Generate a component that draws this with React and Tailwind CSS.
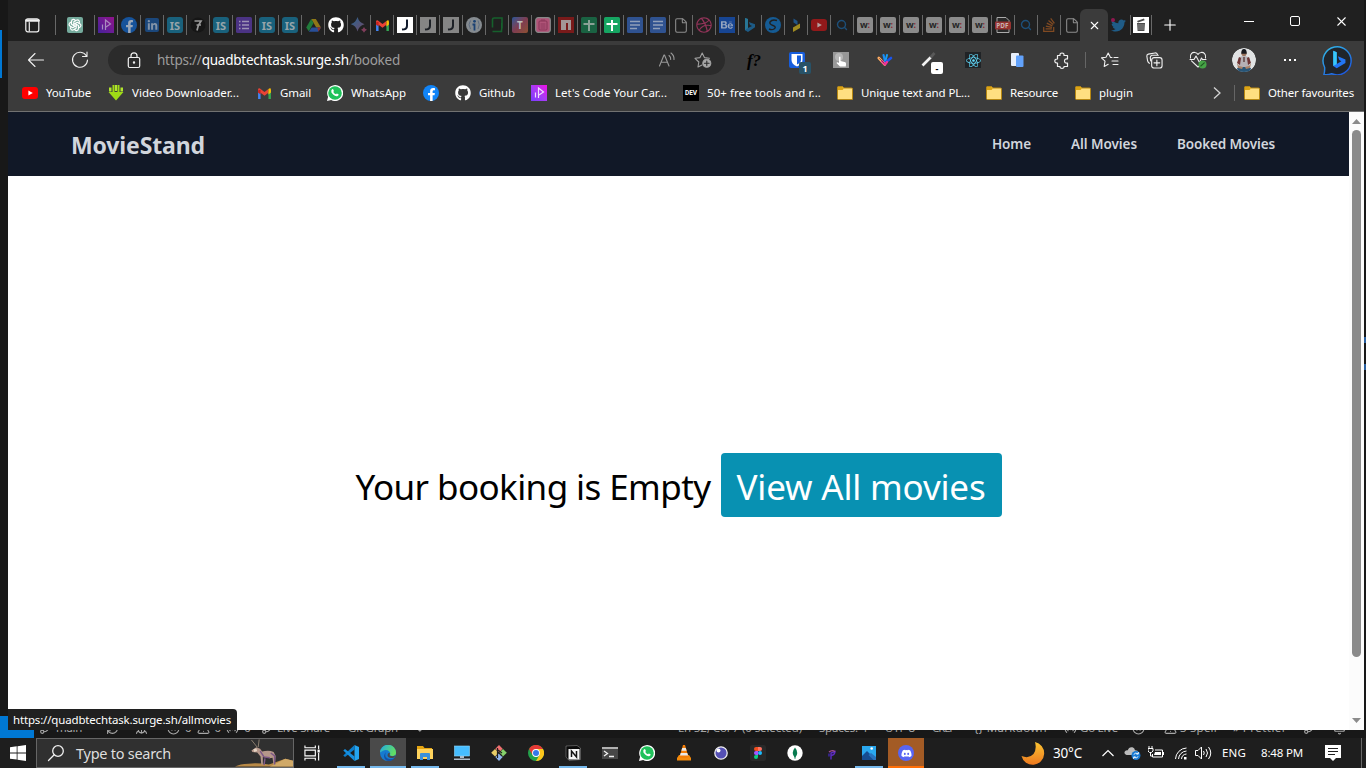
import React, { useLayoutEffect, useRef } from "react";
import { FaFacebookF, FaLinkedinIn, FaGithub, FaDribbble, FaBehance, FaStackOverflow, FaTwitter, FaDiscord, FaReact } from "react-icons/fa";
import { TbBrandOpenai } from "react-icons/tb";
import { X, Plus, Search, File, GitBranch, RefreshCw, CircleX, TriangleAlert, Radio, Bell, Check, Bug } from "lucide-react";

/* Single line of text whose tracking is adjusted to fill the given width. */
function Fit({ w, className = "", children }) {
  const ref = useRef(null);
  useLayoutEffect(() => {
    const el = ref.current;
    const adjust = () => {
      el.style.letterSpacing = "0px";
      const natural = el.getBoundingClientRect().width;
      el.style.letterSpacing = `${(w - natural) / el.textContent.length}px`;
    };
    adjust();
    if (document.fonts) document.fonts.ready.then(adjust);
  }, [w]);
  return (
    <span ref={ref} className={`inline-block shrink-0 whitespace-pre ${className}`}>
      {children}
    </span>
  );
}

/* ---------- tab favicons ---------- */
const ISIcon = () => <span className="flex h-4 w-4 items-center justify-center rounded-[3px] bg-[#19617c] text-[11px] font-bold leading-none text-[#96a4aa]">IS</span>;
const JIcon = ({ on }) => (
  <svg viewBox="0 0 16 16" className="h-4 w-4">
    <rect width="16" height="16" fill={on ? "#fff" : "#858585"} />
    <path d="M10 2.5v6.300q0 3-2.600 3.400l-2.400.3" fill="none" stroke={on ? "#101a2c" : "#1c2026"} strokeWidth="2" />
  </svg>
);
const WIcon = () => <span className="flex h-4 w-4 items-center justify-center rounded-[2px] bg-[#8b8b8b] pb-[2px] text-[9px] font-bold leading-none text-[#252525]">w<span className="text-[#8d2831]">:</span></span>;
const SearchIcon = () => <Search className="h-3 w-3 text-[#1d4f79]" strokeWidth={2.8} />;
const FileIcon = () => <File className="h-[17px] w-[17px] text-[#8c8c8c]" strokeWidth={1.6} />;
const SheetIcon = ({ on }) => (
  <svg viewBox="0 0 16 16" className="h-4 w-4">
    <rect width="16" height="16" rx="1.5" fill={on ? "#16a562" : "#1a6242"} />
    <path d="M8 3v11M2.500 7h11" stroke={on ? "#fff" : "#8ba196"} strokeWidth="2" />
  </svg>
);
const DocIcon = () => (
  <svg viewBox="0 0 16 16" className="h-4 w-4">
    <rect width="16" height="16" rx="1.5" fill="#2f5290" />
    <path d="M3 4.5h10M3 8h10M3 11.5h7" stroke="#91a0b9" strokeWidth="1.5" />
  </svg>
);
const Clockwork = ({ dim }) => (
  <svg viewBox="0 0 16 16" className="h-4 w-4">
    <defs>
      <linearGradient id={dim ? "pp1" : "pp2"} x1="0" y1="1" x2="1" y2="0">
        <stop stopColor={dim ? "#45219a" : "#7a3cff"} />
        <stop offset=".5" stopColor={dim ? "#6b1c94" : "#a93bf5"} />
        <stop offset="1" stopColor={dim ? "#91128a" : "#f010e5"} />
      </linearGradient>
    </defs>
    <rect width="16" height="16" fill={`url(#${dim ? "pp1" : "pp2"})`} />
    <path d="M4.500 7.500v5M7.500 13V3l5 4-4.500 3" fill="none" stroke={dim ? "#a98bc0" : "#f0dcff"} strokeWidth="1.2" />
  </svg>
);
const GmailIcon = () => (
  <svg viewBox="0 0 16 12" className="h-[11px] w-[15px]">
    <path d="M1 12V1.5L3.7 4v8z" fill="#4285f4" />
    <path d="M15 12V1.5L12.3 4v8z" fill="#34a853" />
    <path d="M1 5V2q0-2 2-1.5L8 4.3 12.3 1v4.2L8 8.4 3.7 5.2z" fill="#ea4335" />
    <path d="M12.3 1q2.7-1.6 2.7 1v3l-2.7 2z" fill="#fbbc04" />
    <path d="M1 2.5V5l2.7 2V2z" fill="#c5221f" />
  </svg>
);
const YtIcon = ({ dim }) => (
  <svg viewBox="0 0 16 12" className="h-3 w-4">
    <rect width="16" height="12" rx="3" fill={dim ? "#92191a" : "#f00"} />
    <path d="M6.4 3.4v5.2L10.8 6z" fill={dim ? "#b3a0a0" : "#fff"} />
  </svg>
);
const BingMark = ({ className, a = "#2ec5f4", b = "#2469f5" }) => (
  <svg viewBox="0 0 16 16" className={className}>
    <path d="M3 1l3 1v9l4-2.1-2-1L6.8 5 13 7.3v3L6 15l-3-1.8z" fill={b} />
    <path d="M3 1l3 1v9l-3 2.2z" fill={a} />
  </svg>
);

const tabs = [
  <Clockwork dim />,
  <span className="flex h-4 w-4 items-end justify-center rounded-full bg-[#16539b]"><FaFacebookF className="h-[13px] w-[11px] text-[#9aa8ba]" /></span>,
  <span className="flex h-[14px] w-[14px] items-center justify-center rounded-[2px] bg-[#1b477b]"><FaLinkedinIn className="h-[11px] w-[11px] text-[#8293a8]" /></span>,
  <ISIcon />,
  <svg viewBox="0 0 16 16" className="h-4 w-4"><circle cx="8" cy="8" r="7.5" fill="#161616" /><path d="M4.500 4H11L8.300 8.500 7 13.500M6.500 8h4.500" fill="none" stroke="#999" strokeWidth="1.7" /></svg>,
  <ISIcon />,
  <svg viewBox="0 0 16 16" className="h-4 w-4"><rect width="16" height="16" rx="1.5" fill="#4b3384" /><path d="M6 4.5h7M6 8h7M6 11.5h7M3 4.5h1.5M3 8h1.5M3 11.5h1.5" stroke="#9d93b4" strokeWidth="1.6" /></svg>,
  <ISIcon />,
  <ISIcon />,
  <svg viewBox="0 0 16 16" className="h-[15px] w-[15px]"><path d="M5.5 1h5L16 10h-5z" fill="#8f7617" /><path d="M5.5 1l2.6 4.2L3 14 .2 10z" fill="#207b3a" /><path d="M6.1 10H16l-3 4.7H3z" fill="#284f98" /><path d="M12 10h4l-2.7 4.5z" fill="#91302a" /></svg>,
  <FaGithub className="h-4 w-4 text-white" />,
  <svg viewBox="0 0 16 16" className="h-4 w-4"><defs><linearGradient id="bd" x1="0" y1="0" x2="1" y2="1"><stop stopColor="#286591" /><stop offset="1" stopColor="#704866" /></linearGradient></defs><path d="M6.500 0Q8 5.500 13.500 7.200 8 8.500 6.500 14.500 5 8.500-.5 7.200 5 5.500 6.500 0" fill="url(#bd)" /><path d="M13 10q.8 2 3 2.800-2.200.8-3 3-.8-2.200-3-3 2.200-.8 3-2.800" fill="#7f3d5a" /></svg>,
  <GmailIcon />,
  <JIcon on />,
  <JIcon />,
  <JIcon />,
  <svg viewBox="0 0 16 16" className="h-4 w-4"><circle cx="8" cy="8" r="8" fill="#858b90" /><circle cx="8.500" cy="4.300" r="1.4" fill="#1b4173" /><path d="M6.500 7.500h2v6" fill="none" stroke="#1b4173" strokeWidth="1.8" /><path d="M4.500 3.500Q1.500 7.500 4.500 12M12 3.500q2.500 4 0 8.500" fill="none" stroke="#5d6c80" /></svg>,
  <svg viewBox="0 0 16 16" className="h-4 w-4"><path d="M3.500 10.500V2.500q0-1.500 1.500-1.500h8v10M12.500 12.500v2H3.500M12.800 6v6.500" fill="none" stroke="#16602c" strokeWidth="1.6" /></svg>,
  <span className="flex h-4 w-4 items-center justify-center rounded-[2px] bg-gradient-to-br from-[#205295] via-[#7e3c50] to-[#8d5130] text-[10px] font-bold text-[#bbb]">T</span>,
  <svg viewBox="0 0 16 16" className="h-4 w-4"><rect x=".7" y=".7" width="14.6" height="14.6" rx="2.5" fill="#b05478" stroke="#888" strokeWidth="1.2" /><rect x="4" y="4" width="8" height="9" rx="1" fill="none" stroke="#873456" /><path d="M6 3h4M5.500 7h5M5.500 9h5M5.500 11h5" stroke="#873456" strokeWidth=".8" /></svg>,
  <svg viewBox="0 0 16 16" className="h-4 w-4"><rect width="16" height="16" fill="#791a1a" /><path d="M3 3h10v10h-3V6H8v7H3z" fill="#a39797" /></svg>,
  <SheetIcon />,
  <SheetIcon on />,
  <DocIcon />,
  <DocIcon />,
  <FileIcon />,
  <FaDribbble className="h-4 w-4 text-[#94345a]" />,
  <span className="flex h-4 w-4 items-center justify-center bg-[#174593]"><FaBehance className="h-3 w-3 text-[#97a6bf]" /></span>,
  <BingMark className="h-4 w-4" a="#287694" b="#1d5b86" />,
  <svg viewBox="0 0 16 16" className="h-4 w-4"><circle cx="8" cy="8" r="8" fill="#155b94" /><path d="M12 3.5Q7 2 5 5q-1 2 3 3.5Q12 10 9 12q-2 1.3-5 0" fill="none" stroke="#202020" strokeWidth="1.4" /></svg>,
  <svg viewBox="0 0 16 16" className="h-4 w-4"><path d="M5.500 1.500l4 2.500v4l-4-2.500z" fill="#215485" /><path d="M5 10.500l7-4V11l-7 4z" fill="#a08b20" /></svg>,
  <YtIcon dim />,
  <SearchIcon />,
  <WIcon />, <WIcon />, <WIcon />, <WIcon />, <WIcon />, <WIcon />,
  <svg viewBox="0 0 16 16" className="h-4 w-4"><path d="M2 .5h9l3 3v12H2z" fill="#292929" stroke="#aaa" /><rect y="4.5" width="16" height="8" rx="1" fill="#963330" /><text x="1.3" y="11" fontSize="6.3" fontWeight="700" fill="#c8b2b2" fontFamily="Open Sans, sans-serif">PDF</text></svg>,
  <SearchIcon />,
  <FaStackOverflow className="h-4 w-4 text-[#804a22]" />,
  <FileIcon />,
];

/* ---------- bookmarks ---------- */
const Folder = () => (
  <svg viewBox="0 0 16 16" className="h-4 w-4 shrink-0">
    <path d="M.5 13.500v-11Q.5 1.500 1.500 1.500h4L7 3h7.500q1 0 1 1v10q0 .5-.5.5H1.500q-1 0-1-1z" fill="#ffdf80" stroke="#b68712" />
    <path d="M1 2h4.500L7 3.500 5.500 5H1z" fill="#dba315" />
  </svg>
);
const WhatsIcon = () => (
  <svg viewBox="0 0 16 16" className="h-4 w-4 shrink-0">
    <path d="M0 16l1.100-4.200A8 8 0 1 1 4.200 15z" fill="#fff" />
    <circle cx="8" cy="8" r="6.800" fill="#20c25b" />
    <path d="M5.300 4.200q.8-.3 1.100.5l.5 1.300-.6.900Q7.200 8.500 9 9.300l.8-.9 1.800.9q.2 1.700-1.500 2-2 .3-4-1.700Q3.700 7.300 4.300 5.400q.3-.9 1-1.200" fill="#fff" />
  </svg>
);
const marks = [
  { cell: "w-[86px]", w: 45, t: "YouTube", icon: <YtIcon /> },
  { cell: "w-[148px]", w: 107, t: "Video Downloader...", icon: <svg viewBox="0 0 16 16" className="h-4 w-4"><path d="M4.500 0h2v7h3V0h2v7H15.500L8 15.500.5 7h4z" fill="#9fdb16" /><path d="M7 0h2v6H7zM1 2.500h2.500v4H1zM12.500 2.500H15v4h-2.500z" fill="#b2e52e" /></svg> },
  { cell: "w-[71px]", w: 31, t: "Gmail", icon: <GmailIcon /> },
  { cell: "w-[96px]", w: 55, t: "WhatsApp", icon: <WhatsIcon /> },
  { cell: "w-[32px]", icon: <span className="flex h-4 w-4 items-end justify-center rounded-full bg-[#1184f7]"><FaFacebookF className="h-[13px] w-[11px] text-white" /></span> },
  { cell: "w-[76px]", w: 36, t: "Github", icon: <FaGithub className="h-4 w-4 text-white" /> },
  { cell: "w-[152px]", w: 112, t: "Let's Code Your Car...", icon: <Clockwork /> },
  { cell: "w-[154px]", w: 114, t: "50+ free tools and r...", icon: <span className="flex h-4 w-4 items-center justify-center bg-black font-['Roboto',sans-serif] text-[6.5px] font-bold leading-none text-white">DEV</span> },
  { cell: "w-[149px]", w: 109, t: "Unique text and PL...", icon: <Folder /> },
  { cell: "w-[89px]", w: 48, t: "Resource", icon: <Folder /> },
  { cell: "w-[126px]", w: 34, t: "plugin", icon: <Folder /> },
];
const Mark = ({ cell, w, t, icon }) => (
  <div className={`flex shrink-0 items-center gap-2 ${cell}`}>
    <span className="flex w-4 shrink-0 items-center justify-center">{icon}</span>
    {t && <Fit w={w} className="text-[11.5px] leading-4">{t}</Fit>}
  </div>
);

/* ---------- toolbar ---------- */
const Cell = ({ w = "w-11", children }) => <div className={`flex h-[30px] shrink-0 items-center justify-center ${w}`}>{children}</div>;
const line = { fill: "none", stroke: "#f0f0f0", strokeWidth: 1.1, strokeLinecap: "round", strokeLinejoin: "round" };

function TabBar() {
  return (
    <div className="flex h-[41px] shrink-0 items-start bg-[#202020]">
      <div className="mt-[15px] flex h-5 w-[47px] shrink-0 items-center pl-[17px]">
        <svg viewBox="0 0 15 15" className="h-[15px] w-[15px]" {...line} strokeWidth="1.2"><rect x=".8" y=".8" width="13" height="13" rx="2" /><path d="M4.300 4.500V13" /><path d="M1.500 2.500h12" strokeWidth="2.6" /></svg>
      </div>
      <div className="mt-[15px] flex h-5 w-[39px] shrink-0 items-center border-l border-[#686868] pl-[11px]">
        <span className="flex h-4 w-4 items-center justify-center rounded-[2px] bg-[#75aa9c]"><TbBrandOpenai className="h-[14px] w-[14px] text-white" /></span>
      </div>
      {tabs.map((icon, i) => (
        <div key={i} className={`mt-[15px] flex h-5 shrink-0 items-center border-l border-[#686868] pl-[3px] ${i === tabs.length - 1 ? "w-5" : "w-[23px]"}`}>
          <span className="flex h-4 w-4 shrink-0 items-center justify-center">{icon}</span>
        </div>
      ))}
      <div className="mt-[9px] flex h-8 w-7 shrink-0 items-center justify-center rounded-t-[6px] bg-[#3b3b3b]">
        <X className="h-[13px] w-[13px] text-white" strokeWidth={2} />
      </div>
      <div className="mt-[15px] flex h-5 w-[22px] shrink-0 items-center pl-[3px]">
        <span className="relative flex"><FaTwitter className="h-[15px] w-[15px] text-[#1f5c87]" /><span className="absolute left-0 top-0 h-1 w-1 rounded-full bg-[#8f174e]" /></span>
      </div>
      <div className="mt-[15px] flex h-5 w-[22px] shrink-0 items-center justify-center border-x border-[#686868]">
        <svg viewBox="0 0 16 16" className="h-4 w-4"><rect width="16" height="16" fill="#fff" /><path d="M4 4l7-2.500.6 1.700L5 5.500zM4 6h8l-.6 8H4.600z" fill="#4c4c4c" /><path d="M4.500 8h7M4.500 10h7M4.500 12h7" stroke="#bbb" strokeWidth=".6" /></svg>
      </div>
      <div className="mt-[16px] flex w-9 shrink-0 justify-center"><Plus className="h-[18px] w-[18px] text-white" strokeWidth={1.5} /></div>
      <div className="ml-auto flex h-[42px] items-center">
        <span className="flex w-[46px] justify-center"><span className="h-px w-[10px] bg-white" /></span>
        <span className="flex w-[46px] justify-center"><span className="h-[10px] w-[10px] rounded-[2px] border border-white" /></span>
        <span className="flex w-[46px] justify-center"><X className="h-[15px] w-[15px] text-white" strokeWidth={1.7} /></span>
      </div>
    </div>
  );
}

function Toolbar() {
  return (
    <div className="flex h-[34px] shrink-0 items-end bg-[#3b3b3b]">
      <Cell w="w-[56px]"><svg viewBox="0 0 18 16" className="h-4 w-[18px]" {...line}><path d="M16.500 8H1.500M8 1.500L1.500 8 8 14.500" /></svg></Cell>
      <Cell w="w-[32px]"><svg viewBox="0 0 18 18" className="h-[18px] w-[18px]" {...line}><path d="M15.500 5A7.500 7.500 0 1 0 16.500 9M16 1v4.500h-4.500" /></svg></Cell>
      <div className="ml-3 flex h-[30px] w-[617px] shrink-0 items-center rounded-full bg-[#2b2b2b] pl-[19px]">
        <svg viewBox="0 0 14 17" className="h-[17px] w-[14px] shrink-0" {...line} strokeWidth="1.2"><rect x="1.3" y="5.5" width="11.400" height="10" rx="1.5" /><path d="M4 5.500V3.800a3 3 0 0 1 6 0v1.700" /><circle cx="7" cy="10.500" r=".6" fill="#fff" /></svg>
        <Fit w={243} className="ml-4 text-[13.5px] leading-5 text-[#9d9d9d]">https://<span className="text-white">quadbtechtask.surge.sh</span>/booked</Fit>
        <svg viewBox="0 0 18 16" className="ml-auto mr-[18px] h-4 w-[18px]" {...line} stroke="#999"><path d="M1.500 14L6 3h.5L11 14M3 10.200h6.500M11 3.500q2 1.500 1.700 4M13 1q3.300 2.500 3 6.500" /></svg>
        <svg viewBox="0 0 18 18" className="mr-[13px] h-[18px] w-[18px]" {...line} stroke="#a0a0a0"><path d="M8 14l-4 2 .8-5L1 7.300l5-.7L8.200 2l2.200 4.600 5 .7" /><circle cx="12.800" cy="12.300" r="4" fill="#a9a9a9" /><path d="M12.800 10v4.600M10.500 12.300h4.600" stroke="#2b2b2b" /></svg>
      </div>
      <div className="ml-[6px] flex">
        <Cell><span className="pl-[2px] font-['Liberation_Serif',serif] text-[17px] font-bold italic leading-none text-black">f?</span></Cell>
        <Cell>
          <span className="relative flex h-4 w-4">
            <svg viewBox="0 0 16 16" className="h-4 w-4"><rect width="16" height="16" rx="2" fill="#175ddc" /><path d="M2.500 2h11v6q0 4-5.500 6.500Q2.500 12 2.500 8z" fill="#fff" /><path d="M8 3.500h4V8q0 2.500-4 4.500z" fill="#175ddc" /></svg>
            <span className="absolute left-[10px] top-[10px] flex h-3 w-3 items-center justify-center rounded-[2px] bg-[#285267] text-[9px] font-bold leading-none text-white">1</span>
          </span>
        </Cell>
        <Cell><svg viewBox="0 0 16 16" className="h-4 w-4"><rect width="16" height="16" fill="#989898" /><circle cx="6" cy="5" r="4" fill="#b7b7b7" /><path d="M6 5q1-1 1.500 0v4l5 1.300q1 .7.300 4.200H7L3.500 11q.5-1.500 2.500 0z" fill="#fff" /></svg></Cell>
        <Cell><svg viewBox="0 0 16 16" className="h-4 w-4" fill="none" strokeLinecap="round" strokeLinejoin="round"><path d="M6.500 3L8 9" stroke="#188cf5" strokeWidth="2.2" /><path d="M10 3L8.700 8" stroke="#179ff8" strokeWidth="2" /><path d="M14 6L8.500 10.500" stroke="#1c55ee" strokeWidth="2.6" /><path d="M1.800 6L7.800 12.500" stroke="#ffad61" strokeWidth="2.6" /><path d="M5 9.300L8 12.500 10 10" stroke="#f0329a" strokeWidth="2.3" /><path d="M2.500 6.500L7 11" stroke="#5b3545" strokeWidth=".7" /></svg></Cell>
        <Cell>
          <span className="relative flex h-4 w-4">
            <svg viewBox="0 0 16 16" className="h-4 w-4"><path d="M1.500 13.500L10 5" stroke="#f2f2f2" strokeWidth="2.6" /><path d="M9.500 5.500L13.500 1" stroke="#595959" strokeWidth="2.8" /></svg>
            <span className="absolute left-[10px] top-[10px] flex h-3 w-3 items-center justify-center rounded-[2px] bg-white text-[9px] font-bold leading-none text-black">-</span>
          </span>
        </Cell>
        <Cell><span className="flex h-4 w-4 items-center justify-center bg-[#202326]"><FaReact className="h-[15px] w-[15px] text-[#61dafb]" /></span></Cell>
        <Cell><svg viewBox="0 0 16 16" className="h-4 w-4"><rect x="2" y="1" width="8" height="13" rx="1" fill="#e8effb" /><rect x="7" y="3.500" width="7.500" height="11.500" rx="1" fill="#62a2fb" /></svg></Cell>
        <Cell><svg viewBox="0 0 17 17" className="h-[17px] w-[17px]" {...line} strokeWidth="1.2"><path d="M4.500 3.500H7Q6.700 1 9 1t2 2.500h3.500V7Q11.500 6.700 11.500 9t3 2v3.500H11Q11.200 16.300 9 16.300T7 14.500H4.500V11Q1.800 11.200 1.800 9T4.500 7z" /></svg></Cell>
      </div>
      <div className="mb-[7px] ml-[2px] mr-[2px] h-4 w-px bg-[#666]" />
      <div className="flex">
        <Cell><svg viewBox="0 0 18 16" className="h-4 w-[18px]" {...line}><path d="M11 5.500H9.500L7.200 1 5 5.300l-4.500.6L4 9.200l-.8 5.300 4-2.200M13 5.500h4M11 9h6M12 12.500h5" /></svg></Cell>
        <Cell><svg viewBox="0 0 18 18" className="h-[17px] w-[17px]" {...line} strokeWidth="1.2"><rect x="6" y="6" width="11" height="11" rx="2.5" /><path d="M11.500 8.500v6M8.500 11.500h6M3.500 12Q2 11 1.700 9.500L.9 4.500Q.7 2.700 2.400 2.300L9.500 1q2-.2 2.600 1.500M5 9.500 4.500 6q0-2 2-2.500H13" /></svg></Cell>
        <Cell>
          <svg viewBox="0 0 18 18" className="h-[18px] w-[18px]" {...line}><path d="M1.500 7C.5 3 3.500 1 6 1.500q2 .3 3 2 1-1.700 3-2C14.500 1 17.500 3 16.500 7M2.500 9.800L9 16l1-.8M1 8.500h4L7 5l3.500 6.500L12.500 7l1 1.500H17" /><circle cx="13.500" cy="13.500" r="4" fill="#46a346" stroke="none" /><path d="M11.800 15l3.500-3.200" stroke="#1f5722" /></svg>
        </Cell>
        <Cell w="w-12">
          <svg viewBox="0 0 24 24" className="h-6 w-6 rounded-full"><circle cx="12" cy="12" r="12" fill="#e1e3e4" /><path d="M6 11q2-3 6-3t6 3l-1 8H7z" fill="#b5b0b5" /><path d="M7 9l2 1-1 7-3-2zM17 9l-2 1 1 7 3-2z" fill="#6e3434" /><path d="M11 9h2v5h-2z" fill="#756060" /><path d="M5 20l4-1h6l4 1-1 4H6z" fill="#275577" /><path d="M5 15l2 3 4 1-1 2-4-1z" fill="#a98167" /><path d="M19 15l-2 3-4 1 1 2 4-1z" fill="#a98167" /><circle cx="12" cy="5.500" r="2.600" fill="#9a745e" /><path d="M9.300 5q0-4 2.700-4t2.700 4v.7H9.300z" fill="#17191e" /></svg>
        </Cell>
        <Cell><span className="flex gap-[3px]"><i className="h-[2px] w-[2px] bg-white" /><i className="h-[2px] w-[2px] bg-white" /><i className="h-[2px] w-[2px] bg-white" /></span></Cell>
        <Cell w="w-[50px]">
          <svg viewBox="0 0 32 32" className="h-[31px] w-[31px]"><defs><linearGradient id="bo" x1="0" y1="0" x2=".7" y2="1"><stop stopColor="#33bde8" /><stop offset="1" stopColor="#1d59df" /></linearGradient></defs><path d="M2 30.500Q3 27 2.700 23A14.500 14.500 0 1 1 10 29.700Q6 31 2 30.500z" fill="#20252b" stroke="url(#bo)" strokeWidth="1.5" /><g transform="translate(8 6) scale(1.2)"><path d="M3 0l3 1.300v10L10 9 8.200 8 7 4.700l6.500 2.800v3L6 15l-3-2z" fill="#2275f5" /><path d="M3 0l3 1.300v10L3 13z" fill="#38c8f8" /></g></svg>
        </Cell>
      </div>
    </div>
  );
}

function Bookmarks() {
  return (
    <div className="flex h-9 shrink-0 items-center overflow-hidden bg-[#3b3b3b] pl-[14px] text-white">
      {marks.map((m, i) => <Mark key={i} {...m} />)}
      <svg viewBox="0 0 16 16" className="ml-[8px] h-4 w-4 shrink-0" fill="none" stroke="#d4d4d4" strokeWidth="1.3"><path d="M5 2.500L11 8l-6 5.500" /></svg>
      <span className="ml-[9px] mr-[9px] h-4 w-px shrink-0 bg-[#666]" />
      <Mark cell="w-[112px]" w={86} t="Other favourites" icon={<Folder />} />
    </div>
  );
}

function Page() {
  return (
    <div className="flex min-h-0 flex-1 bg-white">
      <div className="flex w-[1341px] flex-col">
        <nav className="flex h-16 shrink-0 items-center bg-[#111827] pl-[63px] pr-[74px] text-gray-300">
          <Fit w={134} className="pt-[2px] text-[23px] font-bold leading-8">MovieStand</Fit>
          <div className="ml-auto flex gap-10 text-[13.5px] font-semibold">
            <Fit w={39}>Home</Fit>
            <Fit w={66}>All Movies</Fit>
            <Fit w={98}>Booked Movies</Fit>
          </div>
        </nav>
        <main className="flex flex-1 items-start justify-center gap-[10px] pt-[277px] text-[35px] leading-10 text-black">
          <Fit w={355} className="pt-[14px]">Your booking is Empty</Fit>
          <a className="flex h-16 w-[281px] justify-center rounded bg-[#0891b2] pt-[14px] text-white"><Fit w={249}>View All movies</Fit></a>
        </main>
      </div>
      <div className="flex w-[15px] flex-col items-center bg-[#fcfcfc] pt-[7px]">
        <svg viewBox="0 0 9 5" className="h-[5px] w-[9px]"><path d="M0 5L4.500 0 9 5z" fill="#8b8b8b" /></svg>
        <div className="mt-[6px] h-[527px] w-[9px] rounded-full bg-[#8b8b8b]" />
        <svg viewBox="0 0 9 5" className="mb-[7px] mt-auto h-[5px] w-[9px]"><path d="M0 0h9L4.500 5z" fill="#8b8b8b" /></svg>
      </div>
    </div>
  );
}

/* ---------- editor status strip, clipped by the browser window ---------- */
function StatusStrip() {
  const ic = "h-[13px] w-[13px]";
  return (
    <div className="flex h-2 shrink-0 overflow-hidden bg-[#181818]">
      <div className="h-2 w-[34px] shrink-0 bg-[#0078d4]" />
      <div className="-mt-[14px] flex h-[24px] flex-1 items-center text-[11.5px] leading-none text-[#a6a6a6]">
        <div className="flex w-[72px] items-center gap-1 pl-[5px]"><GitBranch className={ic} /><Fit w={26}>main</Fit></div>
        <div className="flex w-[61px] gap-4"><RefreshCw className={ic} /><Bug className={ic} /></div>
        <div className="flex w-[94px] items-center gap-[5px]"><CircleX className={ic} />0<TriangleAlert className={ic} />0<Radio className={ic} />0</div>
        <div className="flex w-[87px] items-center gap-[3px]"><GitBranch className={ic} /><Fit w={53}>Live Share</Fit></div>
        <div className="w-[67px]"><Fit w={50}>Git Graph</Fit></div>
        <Check className={ic} />
        <div className="ml-auto flex w-[688px] items-center">
          <div className="w-[141px]"><Fit w={124}>Ln 52, Col 7 (0 selected)</Fit></div>
          <div className="w-[66px]"><Fit w={48}>Spaces: 4</Fit></div>
          <div className="w-[47px]"><Fit w={30}>UTF-8</Fit></div>
          <div className="w-[42px]"><Fit w={22}>CRLF</Fit></div>
          <div className="w-[90px]"><Fit w={73}>{"{} Markdown"}</Fit></div>
          <div className="flex w-[68px] items-center gap-[3px]"><Radio className={ic} /><Fit w={38}>Go Live</Fit></div>
          <div className="w-[32px]"><CircleX className={ic} /></div>
          <div className="flex w-[69px] items-center gap-[3px]"><TriangleAlert className={ic} /><Fit w={37}>3 Spell</Fit></div>
          <div className="w-[70px]"><Fit w={54}>» Prettier</Fit></div>
          <GitBranch className={ic} /><Bell className="ml-[17px] h-[13px] w-[13px]" />
        </div>
      </div>
    </div>
  );
}

/* ---------- taskbar ---------- */
const apps = [
  { bar: true, icon: <svg viewBox="0 0 16 16" className="h-4 w-4"><path d="M11.500 0L16 2v12l-4.500 2z" fill="#24a4ef" /><path d="M11.500 0v4.500L2 12 .3 10.500z" fill="#0b7dcc" /><path d="M11.500 16v-4.500L2 4 .3 5.500z" fill="#168fdf" /></svg> },
  { active: true, icon: <svg viewBox="0 0 16 16" className="h-4 w-4"><defs><linearGradient id="eg" x1="0" y1="0" x2="1" y2=".4"><stop stopColor="#20a9e5" /><stop offset="1" stopColor="#62de63" /></linearGradient></defs><circle cx="8" cy="8" r="8" fill="#167bd0" /><path d="M0 7.500A8 8 0 0 1 16 8q0 3-3.500 3-3 0-2.500-1.500.7-1.500-.7-3Q6.500 4 2.500 6 .6 7 0 7.500" fill="url(#eg)" /><path d="M6 7Q3.500 12.500 9.500 14q3 .6 5.500-1.200Q12 17 7 15.800 1.500 12 6 7" fill="#1350a5" /><path d="M9.700 9.500Q9 11 12.500 11.200q1.500 0 2.800-1-.5 2-1.800 2.500-5.500 1-6-2.500 0-2.500 2-2.500.8 1 .2 1.800" fill="#4a4a4a" /></svg> },
  { bar: true, icon: <svg viewBox="0 0 16 16" className="h-4 w-4"><path d="M0 1h6l1.500 2H15v5H0z" fill="#e4a411" /><path d="M0 4h16v10H0z" fill="#ffd35c" /><path d="M3 15V9q0-1 1-1h8q1 0 1 1v6h-3v-3H6v3z" fill="#3a91d9" /></svg> },
  { icon: <svg viewBox="0 0 16 16" className="h-4 w-4"><rect x=".5" y="1" width="15" height="10" fill="#46bdff" stroke="#8dd9ff" strokeWidth=".6" /><path d="M6 11h4v2H6zM0 13.500h16V15H0z" fill="#aebdcb" /></svg> },
  { icon: <svg viewBox="0 0 16 16" className="h-4 w-4"><path d="M8 0l3.700 3.700L8 7.400 4.300 3.700z" fill="#f07070" /><path d="M4 4l3.700 3.700L4 11.500.2 7.700z" fill="#e8cd67" /><path d="M12 4l3.800 3.700L12 11.500 8.300 7.700z" fill="#85d16b" /><path d="M8 8.300l3.700 3.700L8 16l-3.700-4z" fill="#90b7ee" /><path d="M6.500 3v10M7 7l4 4M7 5l4 3" stroke="#202020" strokeWidth="1.2" /></svg> },
  { icon: <svg viewBox="0 0 16 16" className="h-4 w-4"><circle cx="8" cy="8" r="8" fill="#23a14b" /><path d="M8 4h7A8 8 0 0 0 1 4l3.500 6z" fill="#e53935" /><path d="M15 4H8l3.500 6L8 16A8 8 0 0 0 15 4" fill="#fbc51b" /><circle cx="8" cy="8" r="3.900" fill="#fff" /><circle cx="8" cy="8" r="3" fill="#3478eb" /></svg> },
  { bar: true, icon: <svg viewBox="0 0 16 16" className="h-4 w-4"><path d="M1 1l11-.5L15.500 3v11.500L4 15.500 1 12z" fill="#0b0b0b" stroke="#999" strokeWidth=".5" /><rect x="3.500" y="4" width="11" height="10.500" fill="#f5f5f5" /><path d="M6.500 12V6l5 6V6" fill="none" stroke="#111" strokeWidth="1.5" /></svg> },
  { icon: <svg viewBox="0 0 16 16" className="h-4 w-4"><rect y="2" width="16" height="12" fill="#474747" /><path d="M0 2h16v2H0z" fill="#b1b1b1" /><path d="M2 6l3.500 2.500L2 11M7 11.500h5" fill="none" stroke="#f1f1f1" strokeWidth="1.3" /></svg> },
  { icon: <WhatsIcon /> },
  { icon: <svg viewBox="0 0 16 16" className="h-4 w-4"><path d="M1 13l2-3h10l2 3v2.500H1z" fill="#f48a0b" /><path d="M7 0h2l3.500 12q-4.500 2-9 0z" fill="#f57d07" /><path d="M6.200 3h3.600l.8 2.700H5.400zM4.700 8h6.600l.8 2.500H4z" fill="#e9e9e9" /></svg> },
  { icon: <svg viewBox="0 0 16 16" className="h-4 w-4"><circle cx="8" cy="8" r="6.200" fill="#5550b5" stroke="#eee" strokeWidth="1.3" /><circle cx="5.500" cy="5.500" r="2" fill="#fff" /></svg> },
  { icon: <svg viewBox="0 0 16 16" className="h-4 w-4"><rect width="16" height="16" rx="2" fill="#292929" /><path d="M8 2v4H6a2 2 0 0 1 0-4z" fill="#f24e1e" /><path d="M8 2h2a2 2 0 0 1 0 4H8z" fill="#ff7262" /><path d="M8 6v4H6a2 2 0 0 1 0-4z" fill="#a259ff" /><circle cx="10" cy="8" r="2" fill="#1abcfe" /><path d="M8 10v2a2 2 0 1 1-2-2z" fill="#0acf83" /></svg> },
  { icon: <svg viewBox="0 0 16 16" className="h-4 w-4"><circle cx="8" cy="8" r="7.700" fill="#fff" /><path d="M8 2.500q4.500 5.500 0 10.500-4.500-5 0-10.500" fill="#087b50" /><path d="M8 9v5" stroke="#087b50" strokeWidth=".7" /></svg> },
  { icon: <svg viewBox="0 0 16 16" className="h-4 w-4" fill="none" strokeWidth="1.4"><path d="M7 14.500V8l4-1.500Q11 9.500 7.500 10.500" stroke="#5c2bc4" /><path d="M5 7q3-2.500 6-.5" stroke="#a74d96" /><path d="M5 8.500v3" stroke="#3e27b0" /></svg> },
  { bar: true, icon: <svg viewBox="0 0 16 16" className="h-4 w-4"><rect x="1" y="1" width="14" height="14" fill="#2aa8ef" /><path d="M1 11l5-5 9 9H1z" fill="#164d91" /><path d="M7.500 10L10 8l5 4v3h-2.500z" fill="#2972bd" /><circle cx="10.700" cy="3.500" r="1.3" fill="#fff" /></svg> },
  { discord: true, icon: <span className="flex h-4 w-4 items-center justify-center rounded-full bg-[#5865f2]"><FaDiscord className="h-[11px] w-[11px] text-white" /></span> },
];

function Taskbar() {
  return (
    <div className="flex h-[30px] shrink-0 items-center bg-[#1e1e1e] text-white">
      <div className="flex w-9 shrink-0 justify-center"><svg viewBox="0 0 16 16" className="h-4 w-4" fill="#fff"><path d="M0 2.200l6.700-.9v6.200H0zM7.500 1.200L16 0v7.500H7.500zM0 8.400h6.700v6.200L0 13.700zM7.500 8.400H16V16l-8.500-1.200z" /></svg></div>
      <div className="flex h-[30px] w-[258px] shrink-0 items-center overflow-hidden border border-[#666] bg-[#303030] pl-[10px]">
        <svg viewBox="0 0 18 18" className="h-[18px] w-[18px] shrink-0" {...line} strokeWidth="1.3"><circle cx="11" cy="7" r="5.300" /><path d="M7.200 10.800L1.500 16.500" /></svg>
        <Fit w={95} className="ml-[11px] text-[14.5px] leading-5 text-[#dedede]">Type to search</Fit>
        <svg viewBox="0 0 60 28" className="ml-auto h-7 w-[58px] shrink-0"><path d="M0 28Q5 25 14 25q10-1 21 1l17-6 8 2v6z" fill="#b98a47" /><path d="M36 28l16-8 8 2v6z" fill="#d0a968" /><path d="M23 8L17 .5M24 8L25 0" stroke="#8d8070" /><path d="M17 11.500l5-3.500 4 1.500 2 3q7-2 12 .5l2 4-.8 9h-1.400l-1-7-3 .5-7-1.500v8h-1.600l-.8-8.500-3.400-4-5-.5z" fill="#b5978a" /><path d="M31 19.500l-1 7M37 14l4 3v9M26 12l4 6 6 1" fill="none" stroke="#7d5787" strokeWidth="1.5" /><path d="M19 10l3-1 1 3-3 1z" fill="#e5d5c4" /></svg>
      </div>
      <div className="flex w-[39px] shrink-0 justify-center pr-[3px]"><svg viewBox="0 0 18 16" className="h-4 w-[17px]" fill="none" stroke="#fff" strokeWidth="1.2"><path d="M1 0v2.500h11V0M1 16v-2.500h11V16M1 5h11v6H1zM15.500 0v4M15.500 8v8" /><path d="M15.500 4.500v3" strokeWidth="2.4" /></svg></div>
      <div className="flex gap-px">
        {apps.map((a, i) => (
          <div key={i} className={`flex h-[30px] w-9 shrink-0 flex-col items-center ${a.active ? "bg-[#4a4a4a]" : a.discord ? "bg-[#a35b25]" : ""}`}>
            <div className="flex h-7 items-center pt-[2px]">{a.icon}</div>
            <div className={`h-[2px] ${a.active ? "w-9 bg-[#76b9ed]" : a.discord ? "w-9 bg-[#ff6f08]" : a.bar ? "w-7 bg-[#76b9ed]" : "w-7"}`} />
          </div>
        ))}
      </div>
      <div className="ml-auto flex h-full w-[345px] shrink-0 items-center">
        <svg viewBox="0 0 24 24" className="h-6 w-6 shrink-0"><defs><linearGradient id="mg" x1="0" y1="0" x2="0" y2="1"><stop stopColor="#fbc431" /><stop offset="1" stopColor="#ed7920" /></linearGradient></defs><path d="M14 1a11.500 11.500 0 1 1-13.500 14Q8 18 12.500 13 16 8 14 1" fill="url(#mg)" /></svg>
        <Fit w={29} className="ml-[8px] text-[13.5px]">30°C</Fit>
        <svg viewBox="0 0 12 8" className="ml-[20px] h-2 w-3 shrink-0" fill="none" stroke="#fff" strokeWidth="1.2"><path d="M.5 7L6 1.500 11.500 7" /></svg>
        <svg viewBox="0 0 17 14" className="ml-[10px] h-[14px] w-[17px] shrink-0"><path d="M2.500 9Q-.5 8 .8 5.500 2 4 3.800 4.300 5 .5 8.500 1.300q2 .7 2.500 3 3 0 3.500 2.200L9 9z" fill="#bcbcbc" /><circle cx="12" cy="9.500" r="4.500" fill="#1678d1" /><path d="M9.700 8.500q2-2.700 4.500-.5M14.300 10.500q-2 2.700-4.500.5M14.300 6v2h-2M9.700 13v-2h2" fill="none" stroke="#fff" strokeWidth=".9" /></svg>
        <svg viewBox="0 0 16 14" className="ml-[7px] h-[14px] w-4 shrink-0" fill="none" stroke="#fff"><path d="M7 4h7.500v7H4.500V8M1 0v3M4 0v3M0 2.500h5V5L3.500 6.500h-2L0 5zM2.500 6.500V10H5M15.500 6v3" /><path d="M7 6h6v3H6z" fill="#fff" stroke="none" /></svg>
        <svg viewBox="0 0 14 14" className="ml-[10px] h-[14px] w-[14px] shrink-0" fill="none" stroke="#fff"><path d="M1.500 13A11.500 11.500 0 0 1 12.500 2M4.500 13A8.500 8.500 0 0 1 12.500 5M7.500 13a5.500 5.500 0 0 1 5-5" /><path d="M10 11h2.500v2.500H10z" fill="#fff" stroke="none" /></svg>
        <svg viewBox="0 0 17 14" className="ml-[7px] h-[14px] w-[17px] shrink-0" fill="none" stroke="#fff"><path d="M.5 4.500h2.500L6.500 1v12L3 9.500H.5zM8.500 5q1.500 2 0 4M11 3q3 4 0 8M13.500 1q4.500 6 0 12" /></svg>
        <Fit w={24} className="ml-[10px] text-[11.5px]">ENG</Fit>
        <Fit w={42} className="ml-[15px] text-[11.5px]">8:48 PM</Fit>
        <svg viewBox="0 0 16 16" className="ml-[22px] h-4 w-4 shrink-0"><path d="M0 0h16v13h-5l-3 3-3-3H0z" fill="#fff" /><path d="M3 3.500h10M3 6.500h10M3 9.500h7" stroke="#202020" /></svg>
        <span className="ml-[20px] h-[30px] w-px bg-[#676767]" />
      </div>
    </div>
  );
}

export default function App() {
  return (
    <div className="relative flex h-[768px] w-[1366px] flex-col overflow-hidden bg-[#181818] font-['Noto_Sans','Open_Sans',sans-serif]">
      <div className="flex h-[730px] shrink-0">
        <div className="flex w-2 shrink-0 flex-col bg-[#181818] pt-[30px]">
          <div className="h-12 w-[2px] bg-[#0078d4]" />
          <div className="mt-auto h-[14px] bg-[#0078d4]" />
        </div>
        <div className="flex w-[1356px] shrink-0 flex-col">
          <TabBar />
          <Toolbar />
          <Bookmarks />
          <div className="h-px shrink-0 bg-[#717171]" />
          <Page />
        </div>
        <div className="flex w-[2px] shrink-0 flex-col bg-[#181818] pt-[337px]">
          <div className="h-[6px] bg-[#295f9f]" />
          <div className="mt-[21px] h-[6px] bg-[#295f9f]" />
        </div>
      </div>
      <StatusStrip />
      <Taskbar />
      <div className="absolute left-2 top-[709px] flex h-[21px] w-[229px] items-center rounded-tr-[4px] bg-[#202020] pl-[5px] text-white">
        <Fit w={218} className="text-[11.5px] leading-4">https://quadbtechtask.surge.sh/allmovies</Fit>
      </div>
    </div>
  );
}
